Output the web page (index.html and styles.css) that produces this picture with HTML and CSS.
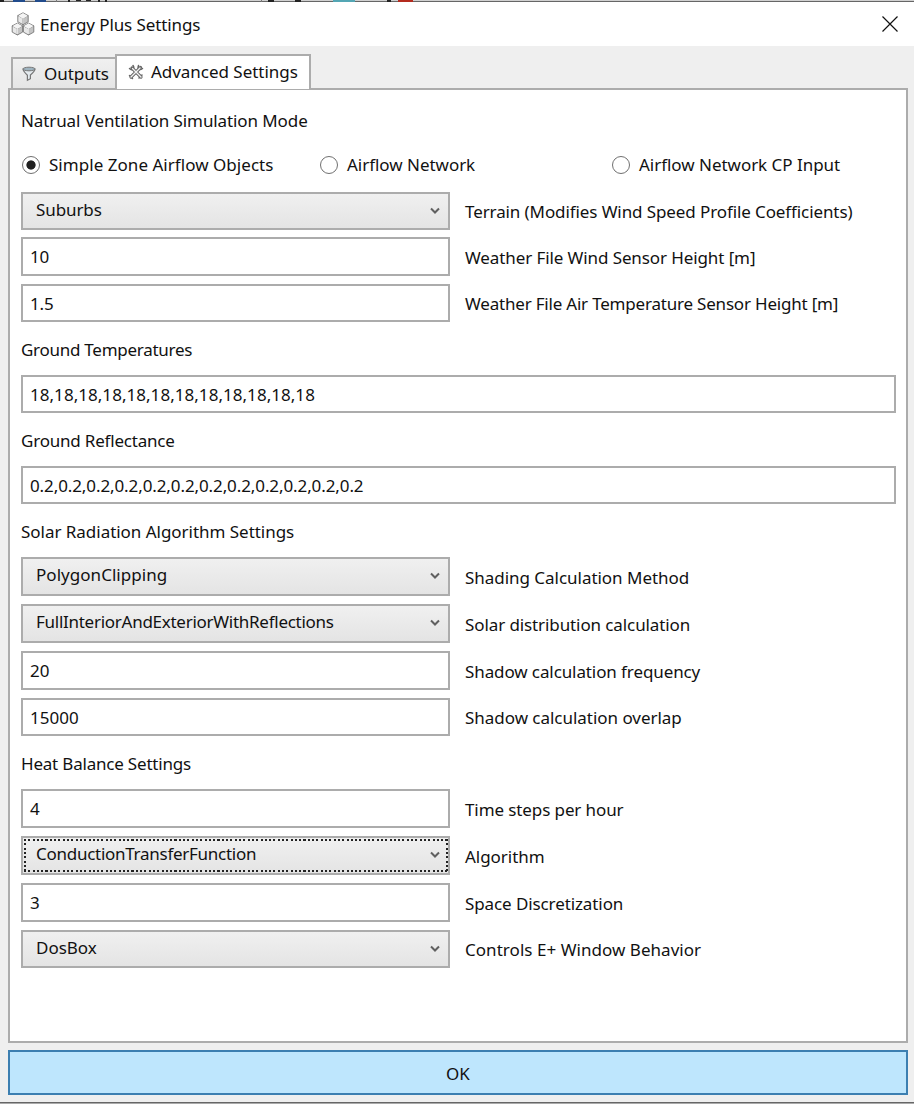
FILE: index.html
```html
<!DOCTYPE html>
<html lang="en">
<head>
<meta charset="utf-8">
<title>Energy Plus Settings</title>
<link rel="stylesheet" href="styles.css">
</head>
<body>
<div class="window">
  <div class="behind-top">
    <svg width="914" height="2" viewBox="0 0 914 2"><path fill="#214b8c" d="M13 0h12v2H13zM35 0h11v2H35z"/><path fill="#222" d="M0 0h4v2H0zM68 0h2v2h-2zM76 0h5v1h-5zM86 0h5v1h-5zM98 0h2v2h-2zM105 0h2v2h-2zM268 0h6v2h-6zM295 0h6v2h-6zM387 0h4v2h-4z"/><path fill="#54a6b4" d="M333 0h22v2h-22z"/><path fill="#b42b1e" d="M398 0h15v2h-15z"/><path fill="#777" d="M56 0h1v2h-1zM261 0h1v2h-1z"/></svg>
  </div>
  <header class="titlebar">
    <svg class="app-icon" width="24" height="24" viewBox="0 0 24 24" stroke="#777" stroke-width=".9" stroke-linejoin="round">
      <g id="cube"><path fill="#fafafa" d="M12 .8l5.200 2.800-5.200 2.800-5.200-2.800z"/><path fill="#e8e8e8" d="M6.800 3.600L12 6.400v6.300L6.800 9.800z"/><path fill="#c4c4c4" d="M17.200 3.600L12 6.400v6.300l5.200-2.900z"/><path stroke="none" fill="#f4f4f4" d="M7.300 3.900L12 1.300l4.700 2.600L12 6.800z"/><path stroke="#fafafa" fill="none" d="M12 6.500v5.400"/></g>
      <use href="#cube" x="-5.600" y="10.300"/><use href="#cube" x="5.600" y="10.300"/>
    </svg>
    <h1 class="title">Energy Plus Settings</h1>
    <svg class="close" width="16" height="16" viewBox="0 0 16 16" stroke="#111" stroke-width="1.200"><path d="M.5.5l15 15M15.500.5l-15 15"/></svg>
  </header>
  <nav class="tabs">
    <div class="tab">
      <svg width="14" height="16" viewBox="0 0 14 16"><path fill="#e4eaee" stroke="#777" stroke-width="1.200" d="M1 3q0 2 4.400 6.200v5l3-1.500V9Q13 5 13 3z"/><ellipse cx="7" cy="3" rx="6" ry="1.800" fill="#9fb4c0" stroke="#777"/></svg>
      <span class="loose">Outputs</span>
    </div>
    <div class="tab active">
      <svg width="16" height="16" viewBox="0 0 16 16" fill="none" stroke-linecap="round"><path stroke="#666" stroke-width="3.200" d="M3 13L12.500 3.500M4 4L13 13"/><path stroke="#666" stroke-width="1.500" d="M1.500 4.500q2 2 3.500.5t0-3.500M10.500 1.500q-1 3 .5 3.800t3.500-.8M1.500 11.500l3 3M11 14l3-3"/><path stroke="#f2f2f2" stroke-width="1.400" d="M3 13L12 4M4.500 4.500L13 13"/></svg>
      <span class="loose">Advanced Settings</span>
    </div>
  </nav>
  <main class="panel">
    <h2 class="heading">Natrual Ventilation Simulation Mode</h2>
    <div class="radios">
      <label class="radio"><i class="dot on"></i><span class="looser">Simple Zone Airflow Objects</span></label>
      <label class="radio"><i class="dot"></i><span class="loose">Airflow Network</span></label>
      <label class="radio"><i class="dot"></i><span class="loose">Airflow Network CP Input</span></label>
    </div>
    <div class="row first"><div class="select"><span>Suburbs</span><svg class="chev" width="10" height="8" viewBox="0 0 10 8"><path d="M1 1.500l4 4 4-4"/></svg></div><span class="label">Terrain (Modifies Wind Speed Profile Coefficients)</span></div>
    <div class="row"><div class="input">10</div><span class="label">Weather File Wind Sensor Height [m]</span></div>
    <div class="row short"><div class="input">1.5</div><span class="label tight">Weather File Air Temperature Sensor Height [m]</span></div>
    <h2 class="heading tighter">Ground Temperatures</h2>
    <div class="input wide looser">18,18,18,18,18,18,18,18,18,18,18,18</div>
    <h2 class="heading tight">Ground Reflectance</h2>
    <div class="input wide">0.2,0.2,0.2,0.2,0.2,0.2,0.2,0.2,0.2,0.2,0.2,0.2</div>
    <h2 class="heading loose">Solar Radiation Algorithm Settings</h2>
    <div class="row"><div class="select"><span class="looser">PolygonClipping</span><svg class="chev" width="10" height="8" viewBox="0 0 10 8"><path d="M1 1.500l4 4 4-4"/></svg></div><span class="label loose">Shading Calculation Method</span></div>
    <div class="row"><div class="select"><span class="tighter">FullInteriorAndExteriorWithReflections</span><svg class="chev" width="10" height="8" viewBox="0 0 10 8"><path d="M1 1.500l4 4 4-4"/></svg></div><span class="label">Solar distribution calculation</span></div>
    <div class="row"><div class="input loose">20</div><span class="label">Shadow calculation frequency</span></div>
    <div class="row short"><div class="input looser">15000</div><span class="label loose">Shadow calculation overlap</span></div>
    <h2 class="heading tight">Heat Balance Settings</h2>
    <div class="row"><div class="input">4</div><span class="label">Time steps per hour</span></div>
    <div class="row"><div class="select focused"><span class="tighter">ConductionTransferFunction</span><svg class="chev" width="10" height="8" viewBox="0 0 10 8"><path d="M1 1.500l4 4 4-4"/></svg></div><span class="label loose">Algorithm</span></div>
    <div class="row"><div class="input">3</div><span class="label">Space Discretization</span></div>
    <div class="row short"><div class="select"><span class="loose">DosBox</span><svg class="chev" width="10" height="8" viewBox="0 0 10 8"><path d="M1 1.500l4 4 4-4"/></svg></div><span class="label looser">Controls E+ Window Behavior</span></div>
  </main>
  <button class="ok">OK</button>
  <div class="behind-bottom"></div>
</div>
</body>
</html>
```
FILE: styles.css
```css
* { box-sizing: border-box; }
body { margin: 0; background: #efefef; color: #111; font: 17px/24px "Noto Sans", "Open Sans", sans-serif; letter-spacing: -.1px; }
svg { display: block; flex: none; }
h1, h2 { margin: 0; font: inherit; }
span, h1, h2 { white-space: nowrap; }
.loose { letter-spacing: -.03px; }
.looser { letter-spacing: .04px; }
.tight { letter-spacing: -.2px; }
.tighter { letter-spacing: -.27px; }
.window { width: 914px; height: 1104px; display: flex; flex-direction: column; overflow: hidden; }
.behind-top { height: 2px; background: #d0d0d0; border-bottom: 1px solid #666; }
.titlebar { height: 44px; background: #fff; display: flex; align-items: center; padding: 0 16px 0 11px; }
.title { margin-left: 5px; padding-top: 1px; }
.close { margin-left: auto; }
.tabs { height: 42px; padding-left: 11px; display: flex; align-items: flex-end; }
.tab { height: 31px; width: 104px; border: 2px solid #acacac; border-width: 2px 0 0 2px; background: linear-gradient(#f0f0f0, #e5e5e5); display: flex; align-items: center; padding-left: 9px; gap: 8px; }
.tab.active { height: 35px; width: 196px; margin-bottom: -1px; background: #fff; border-right-width: 2px; position: relative; gap: 7px; padding: 0 0 2px 11px; }
.panel { margin: 0 6px 0 8px; height: 955px; border: 2px solid #acacac; background: #fff; padding: 8px 11px 0; flex: none; }
.heading { height: 53px; line-height: 55px; }
.panel > .heading:first-child { height: 44px; line-height: 46px; }
.radios { display: grid; grid-template-columns: 298px 292px auto; height: 50px; }
.radio { display: flex; align-items: center; gap: 9px; height: 45px; }
.dot { width: 18px; height: 18px; border: 1.500px solid #707070; border-radius: 50%; margin-left: 1px; background: #fff; }
.dot.on { background: radial-gradient(circle, #212121 4.200px, #fff 5px); }
.row { display: flex; height: 47px; align-items: flex-start; gap: 15px; }
.row.first { height: 45px; }
.row.first .select, .row.short > div { height: 38px; }
.row.short { height: 38px; }
.label { line-height: 41px; }
.first .label, .short .label { line-height: 40px; }
.input, .select { width: 429px; height: 39px; border: 2px solid #acacac; background: #fff; line-height: 36px; padding-left: 7px; flex: none; }
.input.wide { width: 875px; height: 38px; }
.select { background: linear-gradient(#f0f0f0, #e4e4e4); padding: 0 8px 0 13px; line-height: 32px; display: flex; justify-content: space-between; position: relative; }
/* dotted keyboard-focus rectangle */
.focused::after {
  content: ""; position: absolute; inset: 0;
  --h: repeating-linear-gradient(90deg, #222 0 2px, transparent 2px 4.300px);
  --v: repeating-linear-gradient(#222 0 2px, transparent 2px 4.300px);
  background: var(--h) top / 100% 2px no-repeat, var(--h) bottom / 100% 2px no-repeat, var(--v) left / 2px 100% no-repeat, var(--v) right / 2px 100% no-repeat;
  margin: 1px 0 1px 1px;
}
.chev { margin-top: 13px; fill: none; stroke: #606060; stroke-width: 2; }
.ok { flex: none; margin: 7px 6px 0 8px; height: 45px; border: 2px solid #3c7fb1; background: #bee6fd; font: inherit; letter-spacing: 0; color: inherit; padding: 2px 0 0; }
.behind-bottom { margin-top: 7px; height: 2px; flex: none; border-top: 1px solid #666; background: #aaa; }
```
